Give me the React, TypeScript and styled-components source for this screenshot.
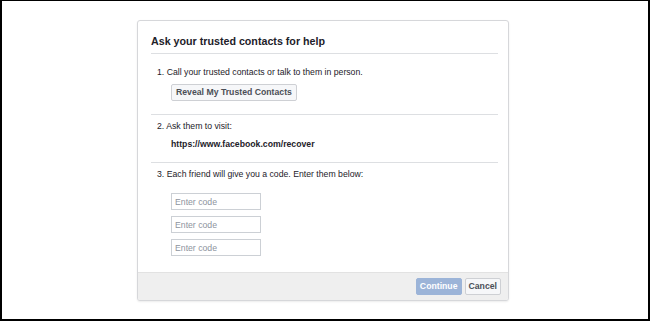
import React from "react";
import styled, { createGlobalStyle } from "styled-components";

const GlobalStyle = createGlobalStyle`
  html, body {
    margin: 0;
    padding: 0;
    background: #ffffff;
  }
  * {
    box-sizing: border-box;
  }
`;

const Frame = styled.div`
  width: 650px;
  height: 321px;
  border: 2px solid #000;
  border-top-width: 1px;
  display: flex;
  justify-content: center;
  padding-top: 19px;
  padding-right: 4px;
  font-family: "Liberation Sans", Arial, sans-serif;
  color: #1d2129;
`;

const Dialog = styled.div`
  width: 372px;
  height: 281px;
  border: 1px solid #d6d7da;
  border-radius: 3px;
  background: #fff;
  box-shadow: 0 1px 2px rgba(0, 0, 0, 0.08);
  display: flex;
  flex-direction: column;
  overflow: hidden;
`;

const Body = styled.div`
  flex: 1;
  padding: 0 10px 0 13px;
  display: flex;
  flex-direction: column;
`;

const Title = styled.h2`
  margin: 0;
  height: 33px;
  padding-top: 14px;
  font-size: 10.7px;
  font-weight: bold;
  line-height: 13px;
  color: #1d2129;
  border-bottom: 1px solid #dddfe2;
`;

const Step = styled.div<{ $height: number; $last?: boolean }>`
  height: ${(p) => p.$height}px;
  padding: 0 0 0 6px;
  display: flex;
  flex-direction: column;
  align-items: flex-start;
  border-bottom: 1px solid ${(p) => (p.$last ? "transparent" : "#dddfe2")};
`;

const StepText = styled.div<{ $top: number }>`
  margin-top: ${(p) => p.$top}px;
  font-size: 8.7px;
  line-height: 12px;
`;

const Indent = styled.div<{ $top: number; $gap?: number }>`
  margin-top: ${(p) => p.$top}px;
  margin-left: 14px;
  display: flex;
  flex-direction: column;
  gap: ${(p) => p.$gap ?? 0}px;
`;

const GreyButton = styled.button`
  height: 17px;
  padding: 0 4px;
  border: 1px solid #ced0d4;
  border-radius: 2px;
  background: #f6f7f9;
  color: #4b4f56;
  font-family: inherit;
  font-size: 8.7px;
  font-weight: bold;
  line-height: 15px;
  cursor: pointer;
`;

const Url = styled.div`
  font-size: 8.7px;
  font-weight: bold;
  line-height: 12px;
`;

const CodeInput = styled.input`
  width: 90px;
  height: 17px;
  padding: 0 3px;
  border: 1px solid #ccd0d5;
  border-radius: 0;
  font-family: inherit;
  font-size: 8.7px;
  color: #1d2129;
  outline: none;
  &::placeholder {
    color: #8d949e;
  }
`;

const Footer = styled.div`
  height: 28px;
  background: #efefef;
  border-top: 1px solid #e2e2e2;
  display: flex;
  justify-content: flex-end;
  align-items: center;
  gap: 3px;
  padding-right: 7px;
`;

const ActionButton = styled.button<{ $primary?: boolean }>`
  height: 17px;
  padding: 0 3px;
  border: 1px solid ${(p) => (p.$primary ? "#9cb4d8" : "#ced0d4")};
  border-radius: 2px;
  background: ${(p) => (p.$primary ? "#9cb4d8" : "#f6f7f9")};
  color: ${(p) => (p.$primary ? "#fff" : "#4b4f56")};
  font-family: inherit;
  font-size: 8.7px;
  font-weight: bold;
  line-height: 15px;
`;

export default function App() {
  return (
    <>
      <GlobalStyle />
      <Frame>
        <Dialog>
          <Body>
            <Title>Ask your trusted contacts for help</Title>
            <Step $height={61}>
              <StepText $top={12}>1. Call your trusted contacts or talk to them in person.</StepText>
              <Indent $top={6}>
                <GreyButton>Reveal My Trusted Contacts</GreyButton>
              </Indent>
            </Step>
            <Step $height={48}>
              <StepText $top={5}>2. Ask them to visit:</StepText>
              <Indent $top={6}>
                <Url>https://www.facebook.com/recover</Url>
              </Indent>
            </Step>
            <Step $height={100} $last>
              <StepText $top={5}>3. Each friend will give you a code. Enter them below:</StepText>
              <Indent $top={13} $gap={6}>
                <CodeInput placeholder="Enter code" />
                <CodeInput placeholder="Enter code" />
                <CodeInput placeholder="Enter code" />
              </Indent>
            </Step>
          </Body>
          <Footer>
            <ActionButton $primary disabled>
              Continue
            </ActionButton>
            <ActionButton>Cancel</ActionButton>
          </Footer>
        </Dialog>
      </Frame>
    </>
  );
}
